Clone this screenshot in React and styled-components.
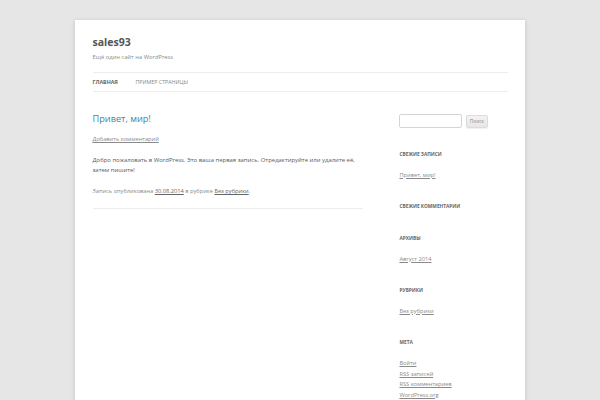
import React from "react";
import styled, { createGlobalStyle } from "styled-components";

const GlobalStyle = createGlobalStyle`
  html, body { margin: 0; padding: 0; }
  body {
    background: #e6e6e6;
    font-family: "Open Sans", "Noto Sans", sans-serif;
    color: #444;
  }
  a { color: inherit; }
`;

const Site = styled.div`
  width: 415px;
  margin: 20px auto 0;
  padding: 0 17.5px 40px;
  background: #fff;
  box-shadow: 0 1px 4px rgba(100, 100, 100, 0.3);
`;

const Header = styled.header`
  padding: 16px 0 11px;
`;

const SiteTitle = styled.h1`
  margin: 0;
  font-size: 10.5px;
  line-height: 13.5px;
  font-weight: 700;
  color: #555;
`;

const Description = styled.h2`
  margin: 2px 0 0;
  font-size: 5.8px;
  line-height: 10.5px;
  font-weight: 400;
  color: #8a8a8a;
`;

const Nav = styled.nav`
  margin-top: 10px;
`;

const Menu = styled.ul`
  list-style: none;
  margin: 0;
  padding: 0;
  display: flex;
  gap: 17.6px;
  border-top: 1px solid #ededed;
  border-bottom: 1px solid #ededed;
`;

const MenuItem = styled.li`
  font-size: 5.3px;
  line-height: 18px;
  text-transform: uppercase;
  color: ${(p) => (p.$current ? "#666" : "#888")};
  font-weight: ${(p) => (p.$current ? 700 : 400)};
`;

const Wrapper = styled.div`
  display: flex;
  justify-content: space-between;
  align-items: flex-start;
  padding-top: 11px;
`;

const Content = styled.main`
  width: 65.104%;
`;

const Article = styled.article`
  padding-bottom: 11px;
  border-bottom: 1px solid #ededed;
`;

const EntryTitle = styled.h1`
  margin: 0;
  font-size: 9.2px;
  line-height: 10.5px;
  font-weight: 400;
  color: #3d86a8;
`;

const CommentsLink = styled.div`
  margin-top: 9.5px;
  font-size: 5.7px;
  line-height: 10.5px;
  color: #8a8a8a;
  a { text-decoration: underline; }
`;

const EntryContent = styled.div`
  margin-top: 10.5px;
  font-size: 5.95px;
  line-height: 10.4px;
  color: #5a5a5a;
  p { margin: 0 0 10.5px; }
`;

const EntryMeta = styled.footer`
  font-size: 5.7px;
  line-height: 10.5px;
  color: #8a8a8a;
  a { color: #666; text-decoration: underline; }
`;

const Sidebar = styled.aside`
  width: 26.041%;
`;

const Widget = styled.section`
  margin-bottom: 21px;
`;

const SearchForm = styled.form`
  display: flex;
  align-items: center;
  gap: 3.5px;
`;

const SearchInput = styled.input`
  box-sizing: border-box;
  width: 63px;
  height: 14px;
  padding: 0 3px;
  border: 1px solid #d4d4d4;
  border-radius: 2px;
  font-family: inherit;
  font-size: 5.7px;
  background: #fff;
`;

const SearchButton = styled.button`
  box-sizing: border-box;
  height: 13px;
  width: 22px;
  padding: 0;
  border: 1px solid #dcdcdc;
  border-radius: 2px;
  background: linear-gradient(#f4f4f4, #e6e6e6);
  box-shadow: 0 1px 1px rgba(64, 64, 64, 0.08);
  font-family: inherit;
  font-size: 4.8px;
  line-height: 11px;
  color: #8a8a8a;
`;

const WidgetTitle = styled.h3`
  margin: 0 0 10.4px;
  font-size: 4.8px;
  line-height: 10.4px;
  font-weight: 700;
  text-transform: uppercase;
  color: #666;
`;

const WidgetList = styled.ul`
  list-style: none;
  margin: 0;
  padding: 0;
`;

const WidgetItem = styled.li`
  font-size: 5.7px;
  line-height: 10.5px;
  color: #8a8a8a;
  a { text-decoration: underline; }
`;

const widgets = [
  { title: "Свежие записи", items: ["Привет, мир!"] },
  { title: "Свежие комментарии", items: [] },
  { title: "Архивы", items: ["Август 2014"] },
  { title: "Рубрики", items: ["Без рубрики"] },
  {
    title: "Мета",
    items: ["Войти", "RSS записей", "RSS комментариев", "WordPress.org"],
  },
];

export default function App() {
  return (
    <>
      <GlobalStyle />
      <Site>
        <Header>
          <SiteTitle>sales93</SiteTitle>
          <Description>Ещё один сайт на WordPress</Description>
          <Nav>
            <Menu>
              <MenuItem $current>Главная</MenuItem>
              <MenuItem>Пример страницы</MenuItem>
            </Menu>
          </Nav>
        </Header>
        <Wrapper>
          <Content>
            <Article>
              <EntryTitle>Привет, мир!</EntryTitle>
              <CommentsLink>
                <a href="#">Добавить комментарий</a>
              </CommentsLink>
              <EntryContent>
                <p>
                  Добро пожаловать в WordPress. Это ваша первая запись.
                  Отредактируйте или удалите её, затем пишите!
                </p>
              </EntryContent>
              <EntryMeta>
                Запись опубликована <a href="#">30.08.2014</a> в рубрике{" "}
                <a href="#">Без рубрики</a>.
              </EntryMeta>
            </Article>
          </Content>
          <Sidebar>
            <Widget>
              <SearchForm onSubmit={(e) => e.preventDefault()}>
                <SearchInput type="text" />
                <SearchButton type="submit">Поиск</SearchButton>
              </SearchForm>
            </Widget>
            {widgets.map((w) => (
              <Widget key={w.title}>
                <WidgetTitle>{w.title}</WidgetTitle>
                {w.items.length > 0 && (
                  <WidgetList>
                    {w.items.map((it) => (
                      <WidgetItem key={it}>
                        <a href="#">{it}</a>
                      </WidgetItem>
                    ))}
                  </WidgetList>
                )}
              </Widget>
            ))}
          </Sidebar>
        </Wrapper>
      </Site>
    </>
  );
}
